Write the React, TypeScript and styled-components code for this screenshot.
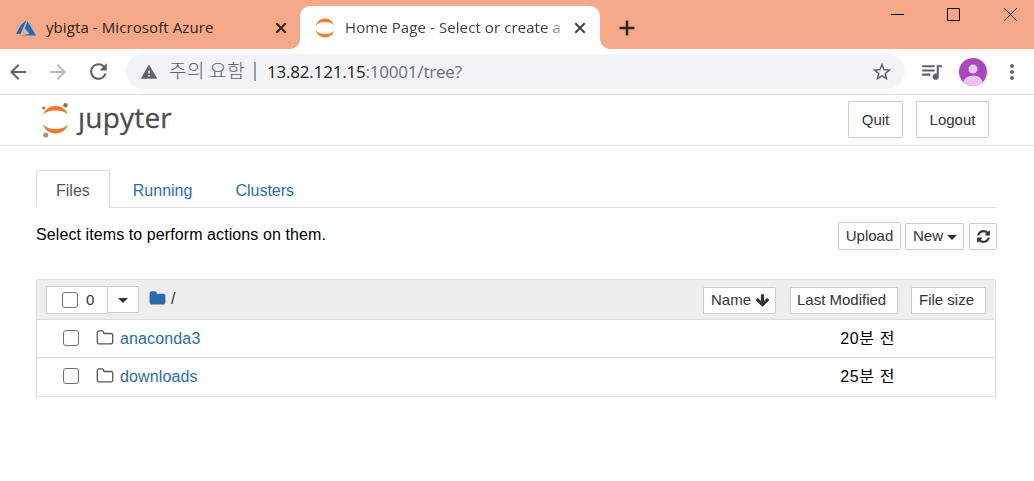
import React from "react";
import styled, { createGlobalStyle } from "styled-components";
import {
  MdArrowBack,
  MdArrowForward,
  MdRefresh,
  MdWarning,
  MdStarBorder,
  MdQueueMusic,
  MdMoreVert,
} from "react-icons/md";

const GlobalStyle = createGlobalStyle`
  *, *::before, *::after { box-sizing: border-box; }
  body {
    margin: 0;
    background: #fff;
    color: #000;
    font-family: "Liberation Sans", "Noto Sans CJK KR", sans-serif;
    font-size: 16px;
    overflow: hidden;
  }
  svg { display: block; flex: none; }
`;

const Window = styled.div`
  width: 1034px;
  height: 481px;
  display: flex;
  flex-direction: column;
  background: #fff;
`;

/* ---------- browser chrome ---------- */

const TabStrip = styled.div`
  height: 49px;
  flex: none;
  display: flex;
  align-items: stretch;
  background: #f6a988;
`;

const BrowserTab = styled.div<{ $active?: boolean }>`
  position: relative;
  display: flex;
  align-items: center;
  width: 300px;
  margin-top: ${(p) => (p.$active ? "6px" : "0")};
  padding: ${(p) => (p.$active ? "0 14px 0 15px" : "6px 13px 0 16px")};
  background: ${(p) => (p.$active ? "#fff" : "transparent")};
  border-radius: 10px 10px 0 0;
  color: ${(p) => (p.$active ? "#3c4043" : "#2b2422")};
  &::before, &::after {
    content: "";
    display: ${(p) => (p.$active ? "block" : "none")};
    position: absolute;
    bottom: 0;
    width: 10px;
    height: 10px;
  }
  &::before {
    left: -10px;
    background: radial-gradient(circle at 0 0, transparent 9.5px, #fff 10.2px);
  }
  &::after {
    right: -10px;
    background: radial-gradient(circle at 100% 0, transparent 9.5px, #fff 10.2px);
  }
`;

const TabTitle = styled.span<{ $fade?: boolean }>`
  flex: 1;
  margin: 0 12px 2px 10px;
  overflow: hidden;
  white-space: nowrap;
  font: 15px/22px "Open Sans", sans-serif;
  letter-spacing: 0.09px;
  ${(p) => p.$fade && "mask-image: linear-gradient(to right, #000 200px, transparent 226px);"}
`;

const NewTab = styled.div`
  display: flex;
  align-items: center;
  padding: 6px 0 0 19px;
`;

const WindowControls = styled.div`
  display: flex;
  gap: 43px;
  margin-left: auto;
  padding: 8px 17px 0 0;
  svg:last-child { margin-left: 1px; }
`;

const Toolbar = styled.div`
  height: 46px;
  flex: none;
  display: flex;
  align-items: center;
  padding: 0 10px 0 6px;
  border-bottom: 1px solid #dadce0;
  color: #5f6368;
`;

const NavButton = styled.span<{ $dim?: boolean }>`
  display: flex;
  margin-right: 16px;
  color: ${(p) => (p.$dim ? "#babcbe" : "#5f6368")};
`;

const AddressBar = styled.div`
  display: flex;
  align-items: center;
  width: 779px;
  height: 35px;
  margin-left: -1px;
  padding: 0 12px 0 14px;
  border-radius: 18px;
  background: #f1f3f4;
`;

const Warning = styled.span`
  margin: 0 0 4px 11px;
  font: 300 19px/24px "Noto Sans CJK KR", sans-serif;
  letter-spacing: 0.4px;
  width: 85px;
  white-space: nowrap;
`;

const Divider = styled.i`
  width: 2px;
  height: 19px;
  background: #9b9ea1;
`;

const Url = styled.span`
  flex: 1;
  margin-left: 11px;
  font: 17px/24px "Open Sans", sans-serif;
  letter-spacing: -0.2px;
  color: #6c7074;
  b { font-weight: 400; color: #202124; }
`;

const Spacer = styled.i<{ $w: number }>`
  flex: none;
  width: ${(p) => p.$w}px;
`;

/* ---------- Jupyter page ---------- */

const Header = styled.header`
  height: 51px;
  flex: none;
  display: flex;
  align-items: flex-start;
  gap: 13px;
  padding: 6px 45px 0 40px;
  border-bottom: 1px solid #e7e7e7;
`;

const Brand = styled.div`
  display: flex;
  margin-right: auto;
  margin-top: -1px;
`;

const BrandName = styled.span`
  margin: -2px 0 0 8px;
  color: #4e4e4e;
  font: 28px/38px "Open Sans", sans-serif;
  letter-spacing: 0.2px;
  -webkit-text-stroke: 0.3px #4e4e4e;
`;

const Button = styled.button<{ $w: number; $h: number; $pad?: number }>`
  display: flex;
  align-items: center;
  justify-content: ${(p) => (p.$pad === undefined ? "center" : "flex-start")};
  flex: none;
  width: ${(p) => p.$w}px;
  height: ${(p) => p.$h}px;
  padding: 0 0 ${(p) => (p.$h === 27 ? 1 : 0)}px ${(p) => p.$pad ?? 0}px;
  border: 1px solid #ccc;
  border-radius: 1px;
  background: #fff;
  color: #333;
  font: 15px/20px "Liberation Sans", sans-serif;
`;

const Content = styled.main`
  width: 960px;
  margin: 24px 0 0 36px;
`;

const Tabs = styled.nav`
  display: flex;
  height: 38px;
  border-bottom: 1px solid #ddd;
`;

const PageTab = styled.a<{ $active?: boolean }>`
  height: 38px;
  margin-right: 3px;
  padding: 10px 19px 0;
  line-height: 20px;
  border: 1px solid ${(p) => (p.$active ? "#ddd" : "transparent")};
  border-bottom-color: ${(p) => (p.$active ? "#fff" : "transparent")};
  border-radius: 3px 3px 0 0;
  color: ${(p) => (p.$active ? "#555" : "#296eaa")};
`;

const Actions = styled.div`
  display: flex;
  align-items: flex-end;
  height: 42px;
  width: 961px;
`;

const Hint = styled.span`
  flex: 1;
  line-height: 20px;
  padding-bottom: 5px;
  letter-spacing: 0.09px;
`;

const Caret = styled.i<{ $gap?: number }>`
  margin-left: ${(p) => p.$gap ?? 0}px;
  margin-top: 2px;
  border: 5px solid transparent;
  border-top-color: #333;
  border-bottom: 0;
`;

const List = styled.section`
  height: 118px;
  margin-top: 29px;
  padding-right: 1px;
  border: 1px solid #ddd;
  border-radius: 2px;
`;

const ListHeader = styled.div`
  display: flex;
  align-items: flex-start;
  height: 40px;
  padding: 6px 8px 0 9px;
  background: #eee;
  border-bottom: 1px solid #ddd;
`;

const MenuButton = styled(Button)`
  margin-left: -1px;
`;

const Breadcrumb = styled.div`
  display: flex;
  align-items: center;
  flex: 1;
  gap: 5px;
  height: 25px;
  margin-left: 10px;
  color: #333;
`;

const SortButton = styled(Button)`
  margin: 1px 0 0 13px;
  &:nth-last-child(2) { margin-left: 14px; }
`;

const Row = styled.div`
  display: flex;
  align-items: center;
  height: 37px;
  padding: 0 99px 1px 26px;
  & + & {
    border-top: 1px solid #ddd;
    height: 39px;
    padding-bottom: 2px;
  }
  > svg { margin-bottom: 1px; }
`;

const Check = styled.span`
  width: 16px;
  height: 16px;
  border: 1px solid #707070;
  border-radius: 3px;
  background: #fff;
`;

const FileName = styled.a`
  flex: 1;
  margin: 2px 0 0 6px;
  line-height: 20px;
  letter-spacing: 0.14px;
  color: #296eaa;
`;

const Modified = styled.span`
  height: 20px;
  line-height: 20px;
  margin-top: 2px;
  letter-spacing: 0.6px;
`;

const Count = styled.span`
  margin-left: 8px;
`;

const Glyph = ({ d, size, color = "#333" }: { d: string; size: number; color?: string }) => (
  <svg width={size} height={size} viewBox="0 0 1792 1792" fill={color}>
    <path d={d} />
  </svg>
);

const FOLDER =
  "M1728 608v704q0 92-66 158t-158 66h-1216q-92 0-158-66t-66-158v-960q0-92 66-158t158-66h320q92 0 158 66t66 158v32h672q92 0 158 66t66 158z";
const FOLDER_OPEN =
  "M1600 1312v-704q0-40-28-68t-68-28h-704q-40 0-68-28t-28-68v-64q0-40-28-68t-68-28h-320q-40 0-68 28t-28 68v960q0 40 28 68t68 28h1216q40 0 68-28t28-68zm128-704v704q0 92-66 158t-158 66h-1216q-92 0-158-66t-66-158v-960q0-92 66-158t158-66h320q92 0 158 66t66 158v32h672q92 0 158 66t66 158z";
const REFRESH =
  "M1639 1056q0 5-1 7-64 268-268 434.5t-478 166.5q-146 0-282.5-55t-243.5-157l-129 129q-19 19-45 19t-45-19-19-45v-448q0-26 19-45t45-19h448q26 0 45 19t19 45-19 45l-137 137q71 66 161 102t187 36q134 0 250-65t186-179q11-17 53-117 8-23 30-23h192q13 0 22.5 9.5t9.5 22.5zm25-800v448q0 26-19 45t-45 19h-448q-26 0-45-19t-19-45 19-45l138-138q-148-137-349-137-134 0-250 65t-186 179q-11 17-53 117-8 23-30 23h-199q-13 0-22.5-9.5t-9.5-22.5v-7q65-268 270-434.5t480-166.5q146 0 284 55.5t245 156.5l130-129q19-19 45-19t45 19 19 45z";
const ARROW_DOWN =
  "M1675 832q0 53-37 90l-651 652q-39 37-91 37-53 0-90-37l-651-652q-38-36-38-90 0-53 38-91l74-75q39-37 91-37 53 0 90 37l294 294v-704q0-52 38-90t90-38h128q52 0 90 38t38 90v704l294-294q37-37 90-37 52 0 91 37l75 75q37 39 37 91z";

const CloseIcon = ({ color }: { color: string }) => (
  <svg width="12" height="12" viewBox="0 0 12 12" stroke={color} strokeWidth="2">
    <path d="M1.3 1.3l9.4 9.4M10.7 1.3l-9.4 9.4" />
  </svg>
);

const AzureIcon = () => (
  <svg width="20" height="16" viewBox="0 0 20 16" fill="#0f72c5">
    <path d="M10.6 0L4.9 4.9 0 13.9h4.5zM11.4 1.3L8.9 8.2l4.7 5.7-9.1 1.7H20z" />
  </svg>
);

const JupyterFavicon = () => (
  <svg width="20" height="20" viewBox="0 0 20 20" fill="#f78029">
    <path d="M.8 7.2C2.2 3 5.8.5 10 .5s7.8 2.5 9.2 6.7C16.8 4.900 13.600 3.900 10 3.900S3.200 4.900.8 7.200z" />
    <path d="M.8 12.800C2.200 17 5.800 19.500 10 19.500s7.800-2.500 9.200-6.700c-2.400 2.300-5.600 3.300-9.200 3.300s-6.800-1-9.200-3.300z" />
  </svg>
);

const JupyterMark = () => (
  <svg width="30" height="38" viewBox="0 0 30 38">
    <g fill="#f37726">
      <path d="M3 14.800C4.700 9.300 9.500 5.900 15.500 5.900S26.300 9.300 28 14.800C25.200 11.600 20.700 10.400 15.500 10.400S5.800 11.600 3 14.800z" />
      <path d="M3 24.500C4.700 30 9.500 33.400 15.500 33.400S26.300 30 28 24.500C25.200 27.700 20.700 28.900 15.500 28.900S5.800 27.700 3 24.500z" />
    </g>
    <circle cx="3.700" cy="8" r="1.500" fill="#767677" />
    <circle cx="25.500" cy="5.300" r="2.200" fill="#767677" />
    <circle cx="5.700" cy="35" r="2.600" fill="#989798" />
  </svg>
);

const Avatar = () => (
  <svg width="28" height="28" viewBox="0 0 28 28">
    <clipPath id="avatar">
      <circle cx="14" cy="14" r="14" />
    </clipPath>
    <g clipPath="url(#avatar)">
      <rect width="28" height="28" fill="#ab47bc" />
      <circle cx="14" cy="11" r="4.500" fill="#e5c8ea" />
      <ellipse cx="14" cy="24.500" rx="9.500" ry="7" fill="#e5c8ea" />
    </g>
  </svg>
);

const files = [
  { name: "anaconda3", modified: "20분 전" },
  { name: "downloads", modified: "25분 전" },
];

export default function App() {
  return (
    <Window>
      <GlobalStyle />
      <TabStrip>
        <BrowserTab>
          <AzureIcon />
          <TabTitle>ybigta - Microsoft Azure</TabTitle>
          <CloseIcon color="#2b2422" />
        </BrowserTab>
        <BrowserTab $active>
          <JupyterFavicon />
          <TabTitle $fade>Home Page - Select or create a</TabTitle>
          <CloseIcon color="#3c4043" />
        </BrowserTab>
        <NewTab>
          <svg width="16" height="16" viewBox="0 0 16 16" stroke="#2b2422" strokeWidth="2.500">
            <path d="M8 .5v15M.5 8h15" />
          </svg>
        </NewTab>
        <WindowControls>
          <svg width="13" height="13" stroke="#000"><path d="M0 6.500h13" /></svg>
          <svg width="13" height="13" stroke="#000" fill="none"><path d="M.5.5h12v12H.5z" /></svg>
          <svg width="13" height="13" stroke="#000"><path d="M.3.300l12.400 12.400M12.700.300L.300 12.700" /></svg>
        </WindowControls>
      </TabStrip>

      <Toolbar>
        <NavButton><MdArrowBack size={24} /></NavButton>
        <NavButton $dim><MdArrowForward size={24} /></NavButton>
        <NavButton><MdRefresh size={25} /></NavButton>
        <AddressBar>
          <MdWarning size={18} />
          <Warning>주의 요함</Warning>
          <Divider />
          <Url><b>13.82.121.15</b>:10001/tree?</Url>
          <MdStarBorder size={22} />
        </AddressBar>
        <Spacer $w={14} />
        <MdQueueMusic size={25} />
        <Spacer $w={15} />
        <Avatar />
        <Spacer $w={13} />
        <MdMoreVert size={24} />
      </Toolbar>

      <Header>
        <Brand>
          <JupyterMark />
          <BrandName>ȷupyter</BrandName>
        </Brand>
        <Button $w={55} $h={37}>Quit</Button>
        <Button $w={73} $h={37}>Logout</Button>
      </Header>

      <Content>
        <Tabs>
          <PageTab $active>Files</PageTab>
          <PageTab>Running</PageTab>
          <PageTab>Clusters</PageTab>
        </Tabs>
        <Actions>
          <Hint>Select items to perform actions on them.</Hint>
          <Button $w={63} $h={28}>Upload</Button>
          <Spacer $w={4} />
          <Button $w={59} $h={27} $pad={7}>New<Caret $gap={4} /></Button>
          <Spacer $w={5} />
          <Button $w={28} $h={27}><Glyph d={REFRESH} size={15} /></Button>
        </Actions>
        <List>
          <ListHeader>
            <Button $w={62} $h={28} $pad={15}><Check /><Count>0</Count></Button>
            <MenuButton $w={32} $h={27}><Caret /></MenuButton>
            <Breadcrumb>
              <Glyph d={FOLDER} size={17} color="#296eaa" />
              <span>/</span>
            </Breadcrumb>
            <SortButton $w={73} $h={27} $pad={7}>
              Name<Spacer $w={4} /><Glyph d={ARROW_DOWN} size={15} />
            </SortButton>
            <SortButton $w={108} $h={27} $pad={6}>Last Modified</SortButton>
            <SortButton $w={75} $h={27} $pad={7}>File size</SortButton>
          </ListHeader>
          {files.map((f) => (
            <Row key={f.name}>
              <Check />
              <Spacer $w={17} />
              <Glyph d={FOLDER_OPEN} size={18} color="#555" />
              <FileName>{f.name}</FileName>
              <Modified>{f.modified}</Modified>
            </Row>
          ))}
        </List>
      </Content>
    </Window>
  );
}
